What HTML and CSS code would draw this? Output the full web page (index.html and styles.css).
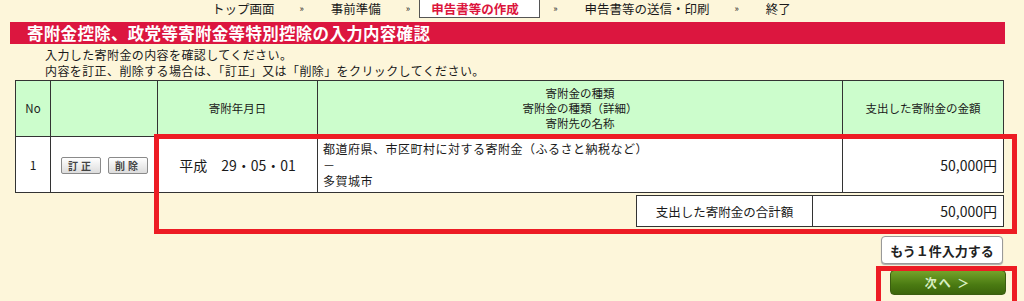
FILE: index.html
```html
<!DOCTYPE html>
<html lang="ja">
<head>
  <meta charset="UTF-8" />
  <title>寄附金控除の入力内容確認</title>
  <link rel="stylesheet" href="styles.css">
</head>
<body>
  <div class="page">
    <nav class="steps">
      <span class="step">トップ画面</span>
      <span class="sep">»</span>
      <span class="step">事前準備</span>
      <span class="sep sep-before">»</span>
      <span class="step active">申告書等の作成</span>
      <span class="sep sep-after">»</span>
      <span class="step">申告書等の送信・印刷</span>
      <span class="sep">»</span>
      <span class="step">終了</span>
    </nav>

    <h1 class="title">寄附金控除、政党等寄附金等特別控除の入力内容確認</h1>

    <div class="intro">
      <p>入力した寄附金の内容を確認してください。</p>
      <p>内容を訂正、削除する場合は、「訂正」又は「削除」をクリックしてください。</p>
    </div>

    <table class="list">
      <tr class="head">
        <th class="c-no">No</th>
        <th class="c-btn"></th>
        <th class="c-date">寄附年月日</th>
        <th class="c-kind">寄附金の種類<br>寄附金の種類（詳細）<br>寄附先の名称</th>
        <th class="c-amount">支出した寄附金の金額</th>
      </tr>
      <tr class="row">
        <td class="c-no">1</td>
        <td class="c-btn"><span class="mini">訂正</span><span class="mini">削除</span></td>
        <td class="c-date">平成　29・05・01</td>
        <td class="c-kind">都道府県、市区町村に対する寄附金（ふるさと納税など）<br>－<br>多賀城市</td>
        <td class="c-amount">50,000円</td>
      </tr>
    </table>

    <table class="total">
      <tr>
        <td class="t-label">支出した寄附金の合計額</td>
        <td class="t-value">50,000円</td>
      </tr>
    </table>

    <div class="actions">
      <button class="btn-add">もう１件入力する</button>
      <button class="btn-next">次へ ＞</button>
    </div>

    <div class="mark mark-table"></div>
    <div class="mark mark-next"></div>
  </div>
</body>
</html>
```

FILE: styles.css
```css
* {
  box-sizing: border-box;
  margin: 0;
  padding: 0;
}

body {
  font-family: "Noto Sans CJK JP", "Noto Sans", sans-serif;
  background: #fdf6da;
  color: #1a1a1a;
  overflow: hidden;
}

.page {
  position: relative;
  width: 1024px;
  height: 301px;
}

/* step navigation */
.steps {
  display: flex;
  align-items: center;
  height: 18px;
  padding-left: 212px;
  font-size: 12.5px;
  line-height: 16px;
}

.sep {
  font-size: 9px;
  margin: 0 27px 0 25px;
}

.sep-before {
  margin-right: 9px;
}

.sep-after {
  margin-left: 13px;
}

.step.active {
  margin-top: -2px;
  height: 19px;
  width: 121px;
  padding-left: 11px;
  background: #fff;
  border: 1px solid #555;
  color: #dc143c;
  font-weight: bold;
  line-height: 18px;
}

/* title bar */
.title {
  margin: 4px 19px 0 10px;
  height: 22px;
  padding-left: 17px;
  background: #dc163f;
  color: #fff;
  font-size: 16.5px;
  font-weight: bold;
  line-height: 22px;
  letter-spacing: 0.3px;
}

.intro {
  padding: 3px 0 0 45px;
  font-size: 12px;
  line-height: 15.5px;
  letter-spacing: 0.4px;
}

/* list table */
.list {
  margin: 2px 0 0 15px;
  width: 989px;
  border-collapse: collapse;
  font-size: 12px;
}

.list th,
.list td {
  border: 1px solid #333;
}

.list .head th {
  height: 56px;
  background: #ccfdcc;
  font-size: 11.5px;
  font-weight: normal;
  line-height: 15px;
}

.list .row td {
  height: 56px;
  background: #fff;
}

.c-no {
  width: 35px;
  text-align: center;
}

.c-btn {
  width: 107px;
}

.c-date {
  width: 160px;
  text-align: center;
}

.c-kind {
  width: 525px;
}

.row .c-date {
  font-size: 14px;
}

.row .c-kind {
  padding: 0 5px;
  font-size: 12px;
  line-height: 16px;
  letter-spacing: 0.5px;
  vertical-align: middle;
}

.row .c-btn {
  padding-left: 10px;
}

.row .c-amount,
.t-value {
  text-align: right;
  padding-right: 6px;
  font-size: 14px;
}

.mini {
  display: inline-block;
  width: 40px;
  height: 17px;
  margin-right: 7px;
  border: 1px solid #8a8a8a;
  border-radius: 2px;
  background: linear-gradient(#ffffff, #dcdcdc);
  color: #444;
  font-size: 10px;
  font-weight: bold;
  line-height: 15px;
  letter-spacing: 3px;
  text-align: center;
  vertical-align: middle;
}

/* total */
.total {
  margin: 2px 0 0 636px;
  width: 368px;
  border-collapse: collapse;
  background: #fff;
}

.total td {
  height: 31px;
  border: 1px solid #333;
}

.t-label {
  width: 176px;
  text-align: center;
  font-size: 12.5px;
}

/* buttons */
.actions {
  display: flex;
  flex-direction: column;
  align-items: flex-end;
  gap: 6px;
  margin: 9px 18px 0 0;
}

.btn-add {
  width: 122px;
  height: 28px;
  margin-right: 3px;
  border: 1px solid #999;
  border-radius: 4px;
  background: #fff;
  box-shadow: 0 1px 1px #aaa;
  font-family: inherit;
  font-size: 13px;
  font-weight: bold;
  color: #222;
}

.btn-next {
  width: 116px;
  height: 25px;
  border: 1px solid #3b5e10;
  border-radius: 4px;
  background: linear-gradient(#74a32a, #4a7a12 60%, #3c650b);
  font-family: inherit;
  font-size: 12px;
  font-weight: bold;
  letter-spacing: 2px;
  color: #d9efc2;
}

/* red annotation boxes */
.mark {
  position: absolute;
  border: 5px solid #ed1c24;
}

.mark-table {
  left: 154px;
  top: 134px;
  width: 863px;
  height: 100px;
}

.mark-next {
  left: 876px;
  top: 266px;
  width: 141px;
  height: 45px;
}
```
